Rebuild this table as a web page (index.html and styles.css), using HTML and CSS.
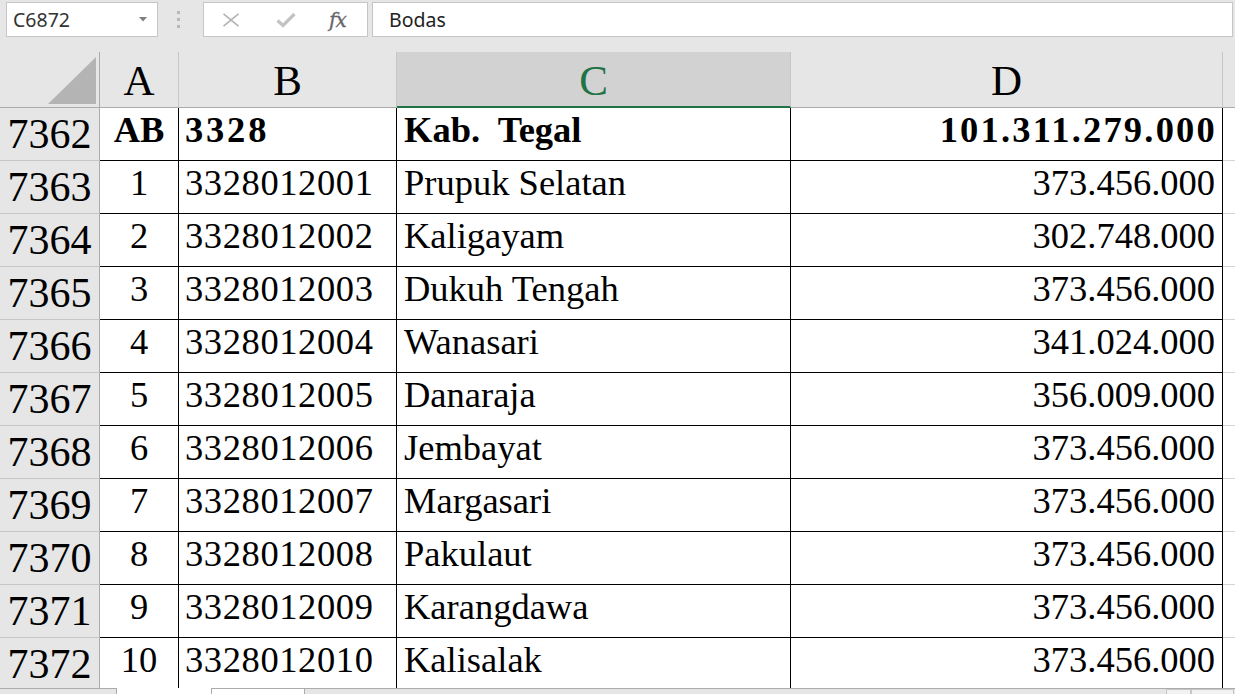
FILE: index.html
```html
<!DOCTYPE html>
<html>
<head>
<meta charset="utf-8">
<link rel="stylesheet" href="styles.css">
</head>
<body>
<div class="app">
  <div class="toolbar">
    <div class="namebox"><span>C6872</span><svg class="caret" width="8" height="5" viewBox="0 0 8 5"><polygon points="0,0 8,0 4,4.5" fill="#7f7f7f"/></svg></div>
    <div class="grip"><i></i><i></i><i></i></div>
    <div class="fxbox">
      <svg class="ic-x" width="18" height="14" viewBox="0 0 18 14"><path d="M1.5 0.8 L16.5 13.2 M16.5 0.8 L1.5 13.2" stroke="#b4b4b4" stroke-width="1.7" fill="none"/></svg>
      <svg class="ic-ok" width="20" height="16" viewBox="0 0 20 16"><path d="M1.5 8.5 L7 13.5 L18.5 2" stroke="#c3c3c3" stroke-width="3.2" fill="none"/></svg>
      <span class="fx">fx</span>
    </div>
    <div class="formula">Bodas</div>
  </div>

  <div class="sheet">
    <div class="hrow">
      <div class="corner"><div class="tri"></div></div>
      <div class="ch">A</div>
      <div class="ch">B</div>
      <div class="ch sel">C</div>
      <div class="ch">D</div>
      <div class="ch fill"></div>
    </div>

    <div class="row bold">
      <div class="rh">7362</div>
      <div class="c ca">AB</div>
      <div class="c cb num">3328</div>
      <div class="c cc">Kab.  Tegal</div>
      <div class="c cd num">101.311.279.000</div>
      <div class="c fill"></div>
    </div>
    <div class="row">
      <div class="rh">7363</div>
      <div class="c ca">1</div>
      <div class="c cb">3328012001</div>
      <div class="c cc">Prupuk Selatan</div>
      <div class="c cd">373.456.000</div>
      <div class="c fill"></div>
    </div>
    <div class="row">
      <div class="rh">7364</div>
      <div class="c ca">2</div>
      <div class="c cb">3328012002</div>
      <div class="c cc">Kaligayam</div>
      <div class="c cd">302.748.000</div>
      <div class="c fill"></div>
    </div>
    <div class="row">
      <div class="rh">7365</div>
      <div class="c ca">3</div>
      <div class="c cb">3328012003</div>
      <div class="c cc">Dukuh Tengah</div>
      <div class="c cd">373.456.000</div>
      <div class="c fill"></div>
    </div>
    <div class="row">
      <div class="rh">7366</div>
      <div class="c ca">4</div>
      <div class="c cb">3328012004</div>
      <div class="c cc">Wanasari</div>
      <div class="c cd">341.024.000</div>
      <div class="c fill"></div>
    </div>
    <div class="row">
      <div class="rh">7367</div>
      <div class="c ca">5</div>
      <div class="c cb">3328012005</div>
      <div class="c cc">Danaraja</div>
      <div class="c cd">356.009.000</div>
      <div class="c fill"></div>
    </div>
    <div class="row">
      <div class="rh">7368</div>
      <div class="c ca">6</div>
      <div class="c cb">3328012006</div>
      <div class="c cc">Jembayat</div>
      <div class="c cd">373.456.000</div>
      <div class="c fill"></div>
    </div>
    <div class="row">
      <div class="rh">7369</div>
      <div class="c ca">7</div>
      <div class="c cb">3328012007</div>
      <div class="c cc">Margasari</div>
      <div class="c cd">373.456.000</div>
      <div class="c fill"></div>
    </div>
    <div class="row">
      <div class="rh">7370</div>
      <div class="c ca">8</div>
      <div class="c cb">3328012008</div>
      <div class="c cc">Pakulaut</div>
      <div class="c cd">373.456.000</div>
      <div class="c fill"></div>
    </div>
    <div class="row">
      <div class="rh">7371</div>
      <div class="c ca">9</div>
      <div class="c cb">3328012009</div>
      <div class="c cc">Karangdawa</div>
      <div class="c cd">373.456.000</div>
      <div class="c fill"></div>
    </div>
    <div class="row">
      <div class="rh">7372</div>
      <div class="c ca">10</div>
      <div class="c cb">3328012010</div>
      <div class="c cc">Kalisalak</div>
      <div class="c cd">373.456.000</div>
      <div class="c fill"></div>
    </div>
  </div>

  <div class="tabbar">
    <div class="seg s1"></div>
    <div class="seg s2"></div>
    <div class="seg s3"></div>
    <div class="seg s4"><div class="btn"></div><div class="btn wide"></div></div>
  </div>
</div>
</body>
</html>
```

FILE: styles.css
```css
html, body {
  margin: 0;
  padding: 0;
}
body {
  width: 1235px;
  height: 694px;
  overflow: hidden;
  background: #e6e6e6;
  font-family: "Noto Sans", "Liberation Sans", sans-serif;
}
.app {
  display: flex;
  flex-direction: column;
  height: 694px;
}

/* toolbar */
.toolbar {
  flex: none;
  height: 52px;
  box-sizing: border-box;
  padding-top: 2px;
  display: flex;
  align-items: flex-start;
}
.namebox {
  margin-left: 6px;
  width: 152px;
  height: 35px;
  box-sizing: border-box;
  border: 1px solid #c6c6c6;
  background: #fff;
  display: flex;
  align-items: center;
  justify-content: space-between;
  padding: 0 10px 0 6px;
  font-size: 19.5px;
  color: #333;
}
.caret {
  display: block;
}
.grip {
  width: 45px;
  height: 35px;
  display: flex;
  flex-direction: column;
  align-items: center;
  justify-content: center;
  gap: 4px;
  padding-right: 4px;
  box-sizing: border-box;
}
.grip i {
  display: block;
  width: 3px;
  height: 3px;
  background: #b9b9b9;
}
.fxbox {
  width: 165px;
  height: 35px;
  box-sizing: border-box;
  border: 1px solid #c6c6c6;
  background: #fff;
  display: flex;
  align-items: center;
}
.ic-x {
  margin-left: 18px;
  display: block;
}
.ic-ok {
  margin-left: 36px;
  display: block;
}
.fx {
  margin-left: 33px;
  font-family: "DejaVu Serif", serif;
  font-style: italic;
  font-size: 20px;
  color: #666;
  letter-spacing: -1px;
  -webkit-text-stroke: 0.3px #666;
}
.formula {
  flex: 1;
  margin-left: 4px;
  margin-right: 2px;
  height: 35px;
  box-sizing: border-box;
  border: 1px solid #c6c6c6;
  background: #fff;
  display: flex;
  align-items: center;
  padding-left: 16px;
  font-size: 19.5px;
  color: #222;
}

/* sheet */
.sheet {
  flex: 1;
  overflow: hidden;
  background: #fff;
}
.hrow, .row {
  display: grid;
  grid-template-columns: 100px 79px 218px 394px 432px 1fr;
}
.hrow {
  height: 56px;
  background: #e6e6e6;
}
.row {
  height: 53px;
}
.corner {
  box-sizing: border-box;
  border-right: 1px solid #ababab;
  border-bottom: 1px solid #ababab;
  display: flex;
  align-items: flex-end;
  justify-content: flex-end;
  padding: 0 3px 3px 0;
}
.tri {
  width: 48px;
  height: 47px;
  background: #b4b4b4;
  clip-path: polygon(100% 0, 100% 100%, 0 100%);
}
.ch {
  box-sizing: border-box;
  border-right: 1px solid #c6c6c6;
  border-bottom: 1px solid #ababab;
  display: flex;
  align-items: flex-end;
  justify-content: center;
  padding-bottom: 5px;
  font-family: "Liberation Serif", serif;
  font-size: 43px;
  line-height: 1;
  color: #000;
}
.ch.sel {
  background: #d2d2d2;
  border-bottom: 2px solid #217346;
  color: #217346;
  padding-bottom: 4px;
}
.ch.fill {
  border-right: none;
}
.rh {
  box-sizing: border-box;
  background: #e6e6e6;
  border-right: 1px solid #ababab;
  border-bottom: 1px solid #c6c6c6;
  display: flex;
  align-items: flex-end;
  justify-content: center;
  padding-bottom: 5px;
  font-family: "Liberation Serif", serif;
  font-size: 42px;
  line-height: 1;
  color: #000;
}
.c {
  box-sizing: border-box;
  border-right: 1px solid #000;
  border-bottom: 1px solid #000;
  display: flex;
  align-items: flex-end;
  padding-bottom: 12px;
  font-family: "Liberation Serif", serif;
  font-size: 36.5px;
  line-height: 1;
  color: #000;
  white-space: pre;
}
.ca {
  justify-content: center;
}
.cb {
  padding-left: 6px;
  letter-spacing: 0.6px;
}
.cc {
  padding-left: 7px;
}
.cd {
  justify-content: flex-end;
  padding-right: 7px;
}
.c.fill {
  border-right: none;
  border-bottom: 1px solid #d4d4d4;
}
.bold .c {
  font-weight: bold;
}
.bold .cb.num {
  letter-spacing: 2.8px;
}
.bold .cd.num {
  letter-spacing: 2.2px;
  padding-right: 5px;
}

/* bottom tab bar */
.tabbar {
  flex: none;
  height: 6px;
  display: flex;
}
.seg {
  box-sizing: border-box;
  height: 6px;
}
.s1 {
  width: 117px;
  background: #e6e6e6;
  border-top: 1px solid #ababab;
  border-right: 1px solid #ababab;
}
.s2 {
  width: 94px;
  background: #fff;
}
.s3 {
  width: 94px;
  background: #fff;
  border-top: 1px solid #ababab;
  border-left: 1px solid #ababab;
  border-right: 1px solid #ababab;
}
.s4 {
  flex: 1;
  background: #e6e6e6;
  border-top: 1px solid #ababab;
  display: flex;
  padding-left: 861px;
}
.btn {
  width: 25px;
  height: 5px;
  box-sizing: border-box;
  border: 1px solid #c6c6c6;
  border-bottom: none;
  background: #f2f2f2;
}
.btn.wide {
  width: 43px;
}
```
